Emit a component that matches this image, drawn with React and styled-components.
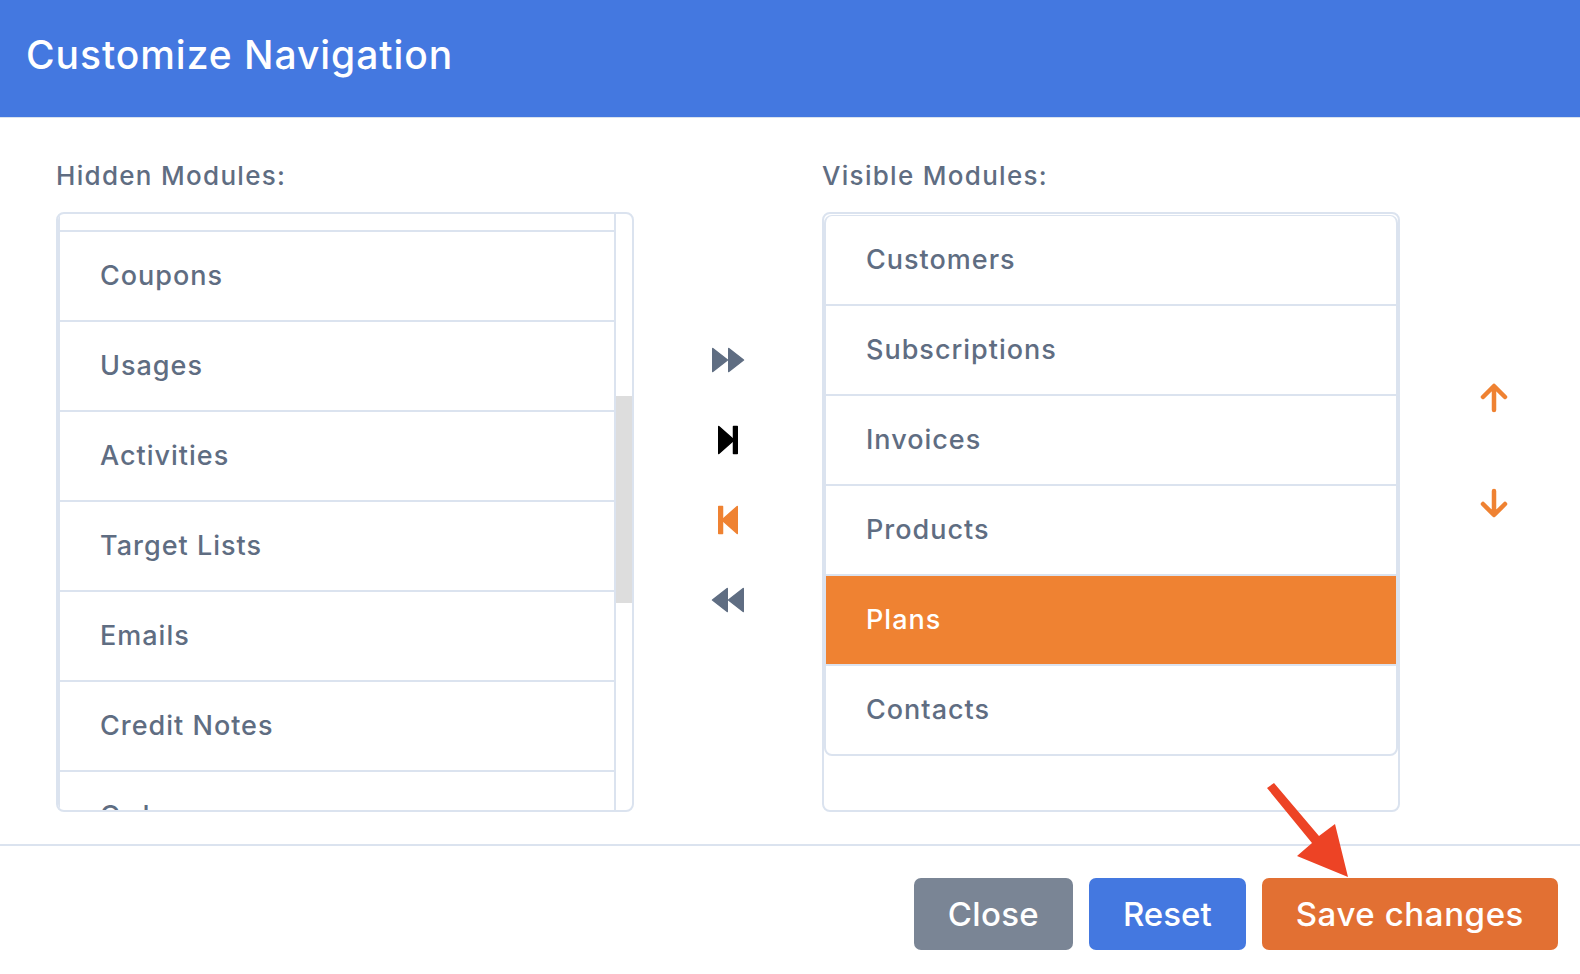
import React from "react";
import styled, { createGlobalStyle } from "styled-components";

const hidden = ["Coupons", "Usages", "Activities", "Target Lists", "Emails", "Credit Notes", "Orders"];
const visible = ["Customers", "Subscriptions", "Invoices", "Products", "Plans", "Contacts"];

export default function App() {
  return (
    <>
      <Global />
      <Modal>
        <Header>Customize Navigation</Header>
        <Body>
          <Column>
            <Label>Hidden Modules:</Label>
            <Box>
              <HiddenList>
                <Stub />
                {hidden.map((name) => (
                  <Row key={name}>{name}</Row>
                ))}
              </HiddenList>
              <ScrollTrack>
                <ScrollThumb />
              </ScrollTrack>
            </Box>
          </Column>
          <Transfer>
            <IconBtn>
              <svg width="34" height="26" viewBox="0 0 34 26" fill="#5f6d82" stroke="#5f6d82" strokeWidth="1.5" strokeLinejoin="round">
                <path d="M1.75 1.5 L16.5 13 L1.75 24.5 Z" />
                <path d="M17.75 1.5 L32.5 13 L17.75 24.5 Z" />
              </svg>
            </IconBtn>
            <IconBtn>
              <svg width="34" height="30" viewBox="0 0 34 30" fill="#000" stroke="#000" strokeWidth="1.5" strokeLinejoin="round">
                <path d="M7.75 1.5 L23 15 L7.75 28.5 Z" />
                <path d="M22.5 1.5 H26.25 V28.5 H22.5 Z" />
              </svg>
            </IconBtn>
            <IconBtn>
              <svg width="34" height="30" viewBox="0 0 34 30" fill="#ef8232" stroke="#ef8232" strokeWidth="1.5" strokeLinejoin="round">
                <path d="M26.25 1.5 L11 15 L26.25 28.5 Z" />
                <path d="M7.75 1.5 H11.5 V28.5 H7.75 Z" />
              </svg>
            </IconBtn>
            <IconBtn>
              <svg width="34" height="26" viewBox="0 0 34 26" fill="#5f6d82" stroke="#5f6d82" strokeWidth="1.5" strokeLinejoin="round">
                <path d="M16.25 1.5 L1.5 13 L16.25 24.5 Z" />
                <path d="M32.25 1.5 L17.5 13 L32.25 24.5 Z" />
              </svg>
            </IconBtn>
          </Transfer>
          <Column>
            <Label>Visible Modules:</Label>
            <Box>
              <VisibleList>
                {visible.map((name) => (
                  <Row key={name} $active={name === "Plans"}>
                    {name}
                  </Row>
                ))}
              </VisibleList>
            </Box>
          </Column>
          <Order>
            <svg width="30" height="30" viewBox="0 0 30 30" fill="none" stroke="#ef8232" strokeWidth="4.5" strokeLinecap="round" strokeLinejoin="round">
              <path d="M15 27 V4 M4 14 L15 3 L26 14" />
            </svg>
            <svg width="30" height="30" viewBox="0 0 30 30" fill="none" stroke="#ef8232" strokeWidth="4.5" strokeLinecap="round" strokeLinejoin="round">
              <path d="M15 3 V26 M4 16 L15 27 L26 16" />
            </svg>
          </Order>
        </Body>
        <Footer>
          <Button $bg="#7a8595" $spacing={0.3}>Close</Button>
          <Button $bg="#4478e0" $spacing={0}>Reset</Button>
          <SaveWrap>
            <Button $bg="#e27033" $spacing={0.6}>Save changes</Button>
            <Arrow width="100" height="110" viewBox="0 0 100 110">
              <path d="M5 10 L12 5 L57 58 L73 46 L86 99 L35 78 L50 65 Z" fill="#ed4325" />
            </Arrow>
          </SaveWrap>
        </Footer>
      </Modal>
    </>
  );
}

const Global = createGlobalStyle`
  html, body {
    margin: 0;
    background: #fff;
    font-family: "Inter", "Open Sans", sans-serif;
  }
`;

const Modal = styled.div`
  width: 1580px;
  height: 974px;
  overflow: hidden;
  display: flex;
  flex-direction: column;
  background: #fff;
`;

const Header = styled.div`
  height: 118px;
  box-sizing: border-box;
  padding: 0 0 9px 26px;
  display: flex;
  align-items: center;
  background: #4478e0;
  color: #fff;
  font-size: 39px;
  font-weight: 500;
  letter-spacing: 0.95px;
  border-bottom: 1px solid #d9e2ee;
`;

const Body = styled.div`
  height: 728px;
  box-sizing: border-box;
  padding: 40px 0 0 56px;
  display: flex;
  align-items: flex-start;
  border-bottom: 2px solid #dbe3ef;
`;

const Column = styled.div`
  width: 578px;
  flex: none;
`;

const Label = styled.div`
  height: 54px;
  padding-top: 1px;
  box-sizing: border-box;
  font-size: 26px;
  font-weight: 500;
  line-height: 34px;
  letter-spacing: 1.3px;
  color: #5f6d82;
`;

const Box = styled.div`
  height: 600px;
  box-sizing: border-box;
  display: flex;
  overflow: hidden;
  border: 2px solid #dbe3ef;
  border-radius: 8px;
`;

const HiddenList = styled.div`
  flex: 1;
  min-width: 0;
  overflow: hidden;
  border-left: 2px solid #dbe3ef;
`;

const Stub = styled.div`
  height: 16px;
`;

const VisibleList = styled.div`
  flex: 1;
  align-self: flex-start;
  margin: 1px 0 0;
  overflow: hidden;
  border: 2px solid #dbe3ef;
  border-top-width: 1px;
  border-radius: 8px;
`;

const Row = styled.div`
  height: 90px;
  box-sizing: border-box;
  padding: 0 0 2px 40px;
  display: flex;
  align-items: center;
  border-top: 2px solid #dbe3ef;
  font-size: 27px;
  font-weight: 500;
  letter-spacing: 1px;
  color: ${(p) => (p.$active ? "#fff" : "#5f6d82")};
  background: ${(p) => (p.$active ? "#ef8232" : "transparent")};

  ${VisibleList} &:first-child {
    height: 88px;
    border-top: 0;
  }
`;

const ScrollTrack = styled.div`
  width: 18px;
  flex: none;
  box-sizing: border-box;
  border-left: 2px solid #dbe3ef;
`;

const ScrollThumb = styled.div`
  height: 207px;
  margin-top: 182px;
  background: #dddddd;
`;

const Transfer = styled.div`
  width: 188px;
  flex: none;
  box-sizing: border-box;
  padding-top: 162px;
  display: flex;
  flex-direction: column;
  align-items: center;
`;

const IconBtn = styled.div`
  height: 80px;
  display: flex;
  align-items: center;
  justify-content: center;
`;

const Order = styled.div`
  width: 188px;
  flex: none;
  box-sizing: border-box;
  padding-top: 225px;
  display: flex;
  flex-direction: column;
  align-items: center;
  gap: 75px;
`;

const Footer = styled.div`
  flex: 1;
  box-sizing: border-box;
  padding: 32px 22px 0 0;
  display: flex;
  justify-content: flex-end;
  align-items: flex-start;
  gap: 16px;
`;

const SaveWrap = styled.div`
  position: relative;
`;

const Arrow = styled.svg`
  position: absolute;
  left: 0;
  top: -100px;
`;

const Button = styled.button`
  height: 72px;
  padding: 0 34px;
  border: 0;
  border-radius: 7px;
  background: ${(p) => p.$bg};
  color: #fff;
  font-family: inherit;
  font-size: 33px;
  font-weight: 500;
  letter-spacing: ${(p) => p.$spacing}px;
`;
